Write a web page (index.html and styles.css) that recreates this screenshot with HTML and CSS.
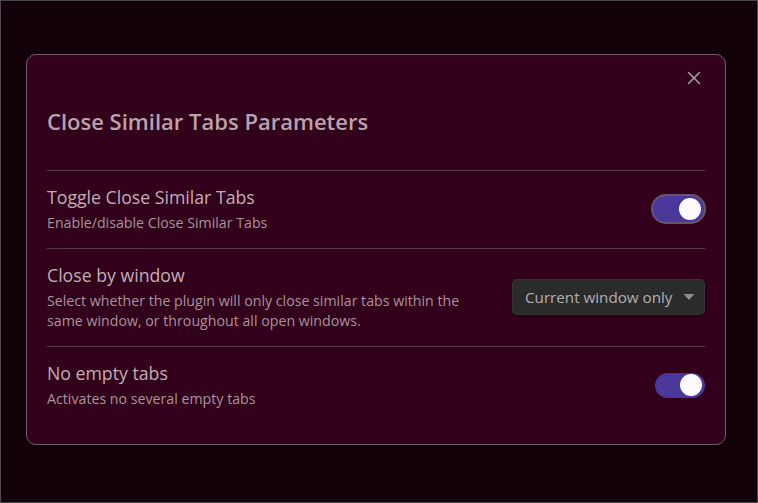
FILE: index.html
```html
<!DOCTYPE html>
<html lang="en">
<head>
<meta charset="utf-8">
<title>Close Similar Tabs Parameters</title>
<link rel="stylesheet" href="styles.css">
</head>
<body>
<div class="modal">
  <button class="modal-close" aria-label="Close">
    <svg width="14" height="14" viewBox="0 0 14 14"><path d="M1.5 1.5 L12.5 12.5 M12.5 1.5 L1.5 12.5" stroke="currentColor" stroke-width="1.6" stroke-linecap="round" fill="none"/></svg>
  </button>
  <h2 class="modal-title">Close Similar Tabs Parameters</h2>
  <div class="setting">
    <div class="setting-info">
      <div class="setting-name">Toggle Close Similar Tabs</div>
      <div class="setting-desc">Enable/disable Close Similar Tabs</div>
    </div>
    <div class="setting-control">
      <div class="toggle is-on is-focused"><span class="knob"></span></div>
    </div>
  </div>
  <div class="setting">
    <div class="setting-info narrow">
      <div class="setting-name">Close by window</div>
      <div class="setting-desc">Select whether the plugin will only close similar tabs within the same window, or throughout all open windows.</div>
    </div>
    <div class="setting-control">
      <div class="dropdown">
        <span>Current window only</span>
        <svg class="caret" width="12" height="8" viewBox="0 0 12 8"><path d="M0.5 1 L11.5 1 L6 7 Z" fill="currentColor"/></svg>
      </div>
    </div>
  </div>
  <div class="setting">
    <div class="setting-info">
      <div class="setting-name">No empty tabs</div>
      <div class="setting-desc">Activates no several empty tabs</div>
    </div>
    <div class="setting-control">
      <div class="toggle is-on"><span class="knob"></span></div>
    </div>
  </div>
</div>
</body>
</html>
```

FILE: styles.css
```css
* { box-sizing: border-box; }
html, body { margin: 0; height: 100%; }
body {
  background: #120008;
  border: 1px solid #4d4850;
  font-family: "Open Sans", "Noto Sans", sans-serif;
  display: flex;
  align-items: flex-start;
  padding: 53px 0 0 25px;
}
.modal {
  position: relative;
  width: 700px;
  height: 391px;
  background: #32001a;
  border: 1px solid #6f5f68;
  border-radius: 10px;
  padding: 0 20px;
}
.modal-close {
  position: absolute;
  top: 16px;
  right: 24px;
  background: none;
  border: 0;
  padding: 0;
  color: #a99aa3;
  width: 14px;
  height: 14px;
  display: flex;
}
.modal-title {
  margin: 52px 0 35px;
  font-size: 22px;
  line-height: 28px;
  font-weight: 600;
  color: #b7a3ad;
}
.setting {
  display: flex;
  align-items: center;
  border-top: 1px solid #5a3a4b;
  padding: 14px 0 15px;
}
.setting-info { flex: 1; }
.setting-info.narrow { flex: 0 0 430px; margin-right: auto; }
.setting-name {
  font-size: 17.7px;
  line-height: 24px;
  color: #c2aeb8;
}
.setting-desc {
  margin-top: 4px;
  font-size: 14.2px;
  line-height: 20px;
  color: #a8939e;
}
.setting-control { display: flex; align-items: center; }
.toggle {
  position: relative;
  width: 50px;
  height: 25px;
  border-radius: 13px;
  background: #4a379a;
}
.toggle.is-focused {
  width: 51px;
  height: 26px;
  margin-right: 1px;
  box-shadow: 0 0 0 2px #65566e;
}
.toggle .knob {
  position: absolute;
  top: 50%;
  right: 3px;
  width: 22px;
  height: 22px;
  margin-top: -11px;
  border-radius: 50%;
  background: #fdfbff;
}
.dropdown {
  width: 193px;
  height: 36px;
  background: #2b2b2b;
  border-radius: 5px;
  box-shadow: 0 1px 2px rgba(0,0,0,0.5), inset 0 0 0 1px #333;
  display: flex;
  align-items: center;
  justify-content: space-between;
  padding: 0 10px 0 13px;
  font-size: 15.2px;
  color: #b4afb0;
}
.caret { color: #8d8a8b; }
```
